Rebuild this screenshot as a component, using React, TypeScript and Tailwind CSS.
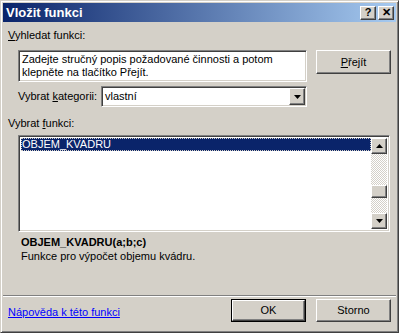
import React from 'react';

const raised =
    'border border-t-white border-l-white border-r-[#404040] border-b-[#404040] shadow-[inset_-1px_-1px_0_#808080,inset_1px_1px_0_#d4d0c8]';
const sunken =
    'border border-t-[#808080] border-l-[#808080] border-r-white border-b-white shadow-[inset_1px_1px_0_#404040,inset_-1px_-1px_0_#d4d0c8]';

function TitleButton({ children }: { children: React.ReactNode }) {
    return (
        <div className={`w-[16px] h-[14px] bg-[#d4d0c8] ${raised} flex items-center justify-center text-[11px] font-bold leading-none text-black`}>
            {children}
        </div>
    );
}

function Arrow({ up }: { up?: boolean }) {
    return (
        <svg width="7" height="4" viewBox="0 0 7 4">
            {up ? <path d="M3.5 0 L7 4 L0 4 Z" fill="#000" /> : <path d="M0 0 L7 0 L3.5 4 Z" fill="#000" />}
        </svg>
    );
}

export default function App() {
    return (
        <div className="w-[399px] h-[333px] bg-[#d4d0c8] text-[11px] leading-[13px] text-black font-['Liberation_Sans',Arial,sans-serif] border border-t-[#d4d0c8] border-l-[#d4d0c8] border-r-[#404040] border-b-[#404040] shadow-[inset_1px_1px_0_white,inset_-1px_-1px_0_#808080] p-[2px] flex flex-col overflow-hidden">
            {/* title bar */}
            <div className="h-[19px] flex items-center justify-between pl-[3px] pr-[2px] bg-[linear-gradient(to_right,#0a246a,#a6caf0)]">
                <span className="text-white font-bold text-[13px] leading-[16px]">Vložit funkci</span>
                <div className="flex gap-[2px]">
                    <TitleButton>?</TitleButton>
                    <TitleButton>✕</TitleButton>
                </div>
            </div>

            <div className="flex-1 flex flex-col px-[5px] pt-[7px]">
                <div>
                    <span className="underline">V</span>yhledat funkci:
                </div>

                <div className="flex mt-[8px] ml-[10px]">
                    <div className={`w-[289px] h-[32px] bg-white ${sunken} px-[3px] pt-[2px]`}>
                        Zadejte stručný popis požadované činnosti a potom klepněte na tlačítko Přejít.
                    </div>
                    <div className={`ml-[9px] w-[75px] h-[24px] ${raised} flex items-center justify-center`}>
                        <span>
                            <span className="underline">P</span>řejít
                        </span>
                    </div>
                </div>

                <div className="flex items-center mt-[4px] ml-[10px]">
                    <span className="w-[83px]">
                        Vybrat <span className="underline">k</span>ategorii:
                    </span>
                    <div className={`w-[206px] h-[21px] bg-white ${sunken} flex items-center justify-between pl-[3px] pr-[1px]`}>
                        <span>vlastní</span>
                        <div className={`w-[16px] h-[17px] bg-[#d4d0c8] ${raised} flex items-center justify-center`}>
                            <Arrow />
                        </div>
                    </div>
                </div>

                <div className="mt-[10px]">
                    Vybrat <span className="underline">f</span>unkci:
                </div>

                <div className={`mt-[5px] ml-[10px] w-[372px] h-[97px] bg-white ${sunken} flex p-[2px]`}>
                    <div className="flex-1">
                        <div className="h-[13px] bg-[#0a246a] text-white leading-[13px] pl-[1px] outline outline-1 outline-dotted outline-[#d4d0c8] -outline-offset-1">
                            OBJEM_KVADRU
                        </div>
                    </div>
                    <div className="w-[16px] flex flex-col bg-[repeating-conic-gradient(#d4d0c8_0_25%,#ffffff_0_50%)] bg-[length:2px_2px]">
                        <div className={`h-[16px] bg-[#d4d0c8] ${raised} flex items-center justify-center`}>
                            <Arrow up />
                        </div>
                        <div className="h-[31px]" />
                        <div className={`h-[13px] bg-[#d4d0c8] ${raised}`} />
                        <div className="flex-1" />
                        <div className={`h-[16px] bg-[#d4d0c8] ${raised} flex items-center justify-center`}>
                            <Arrow />
                        </div>
                    </div>
                </div>

                <div className="mt-[3px] ml-[13px] font-bold leading-[14px]">OBJEM_KVADRU(a;b;c)</div>
                <div className="mt-[1px] ml-[13px]">Funkce pro výpočet objemu kvádru.</div>

                <div className="flex-1" />

                <div className="border-t border-t-[#808080] border-b border-b-white -mx-[5px]" />

                <div className="flex items-center justify-between mt-[2px] mb-[8px]">
                    <span className="text-[#0000ff] underline mt-[4px]">Nápověda k této funkci</span>
                    <div className="flex gap-[10px]">
                        <div className="w-[75px] h-[23px] border border-black flex">
                            <div className={`flex-1 ${raised} flex items-center justify-center`}>OK</div>
                        </div>
                        <div className={`w-[75px] h-[23px] ${raised} flex items-center justify-center`}>Storno</div>
                    </div>
                </div>
            </div>
        </div>
    );
}
